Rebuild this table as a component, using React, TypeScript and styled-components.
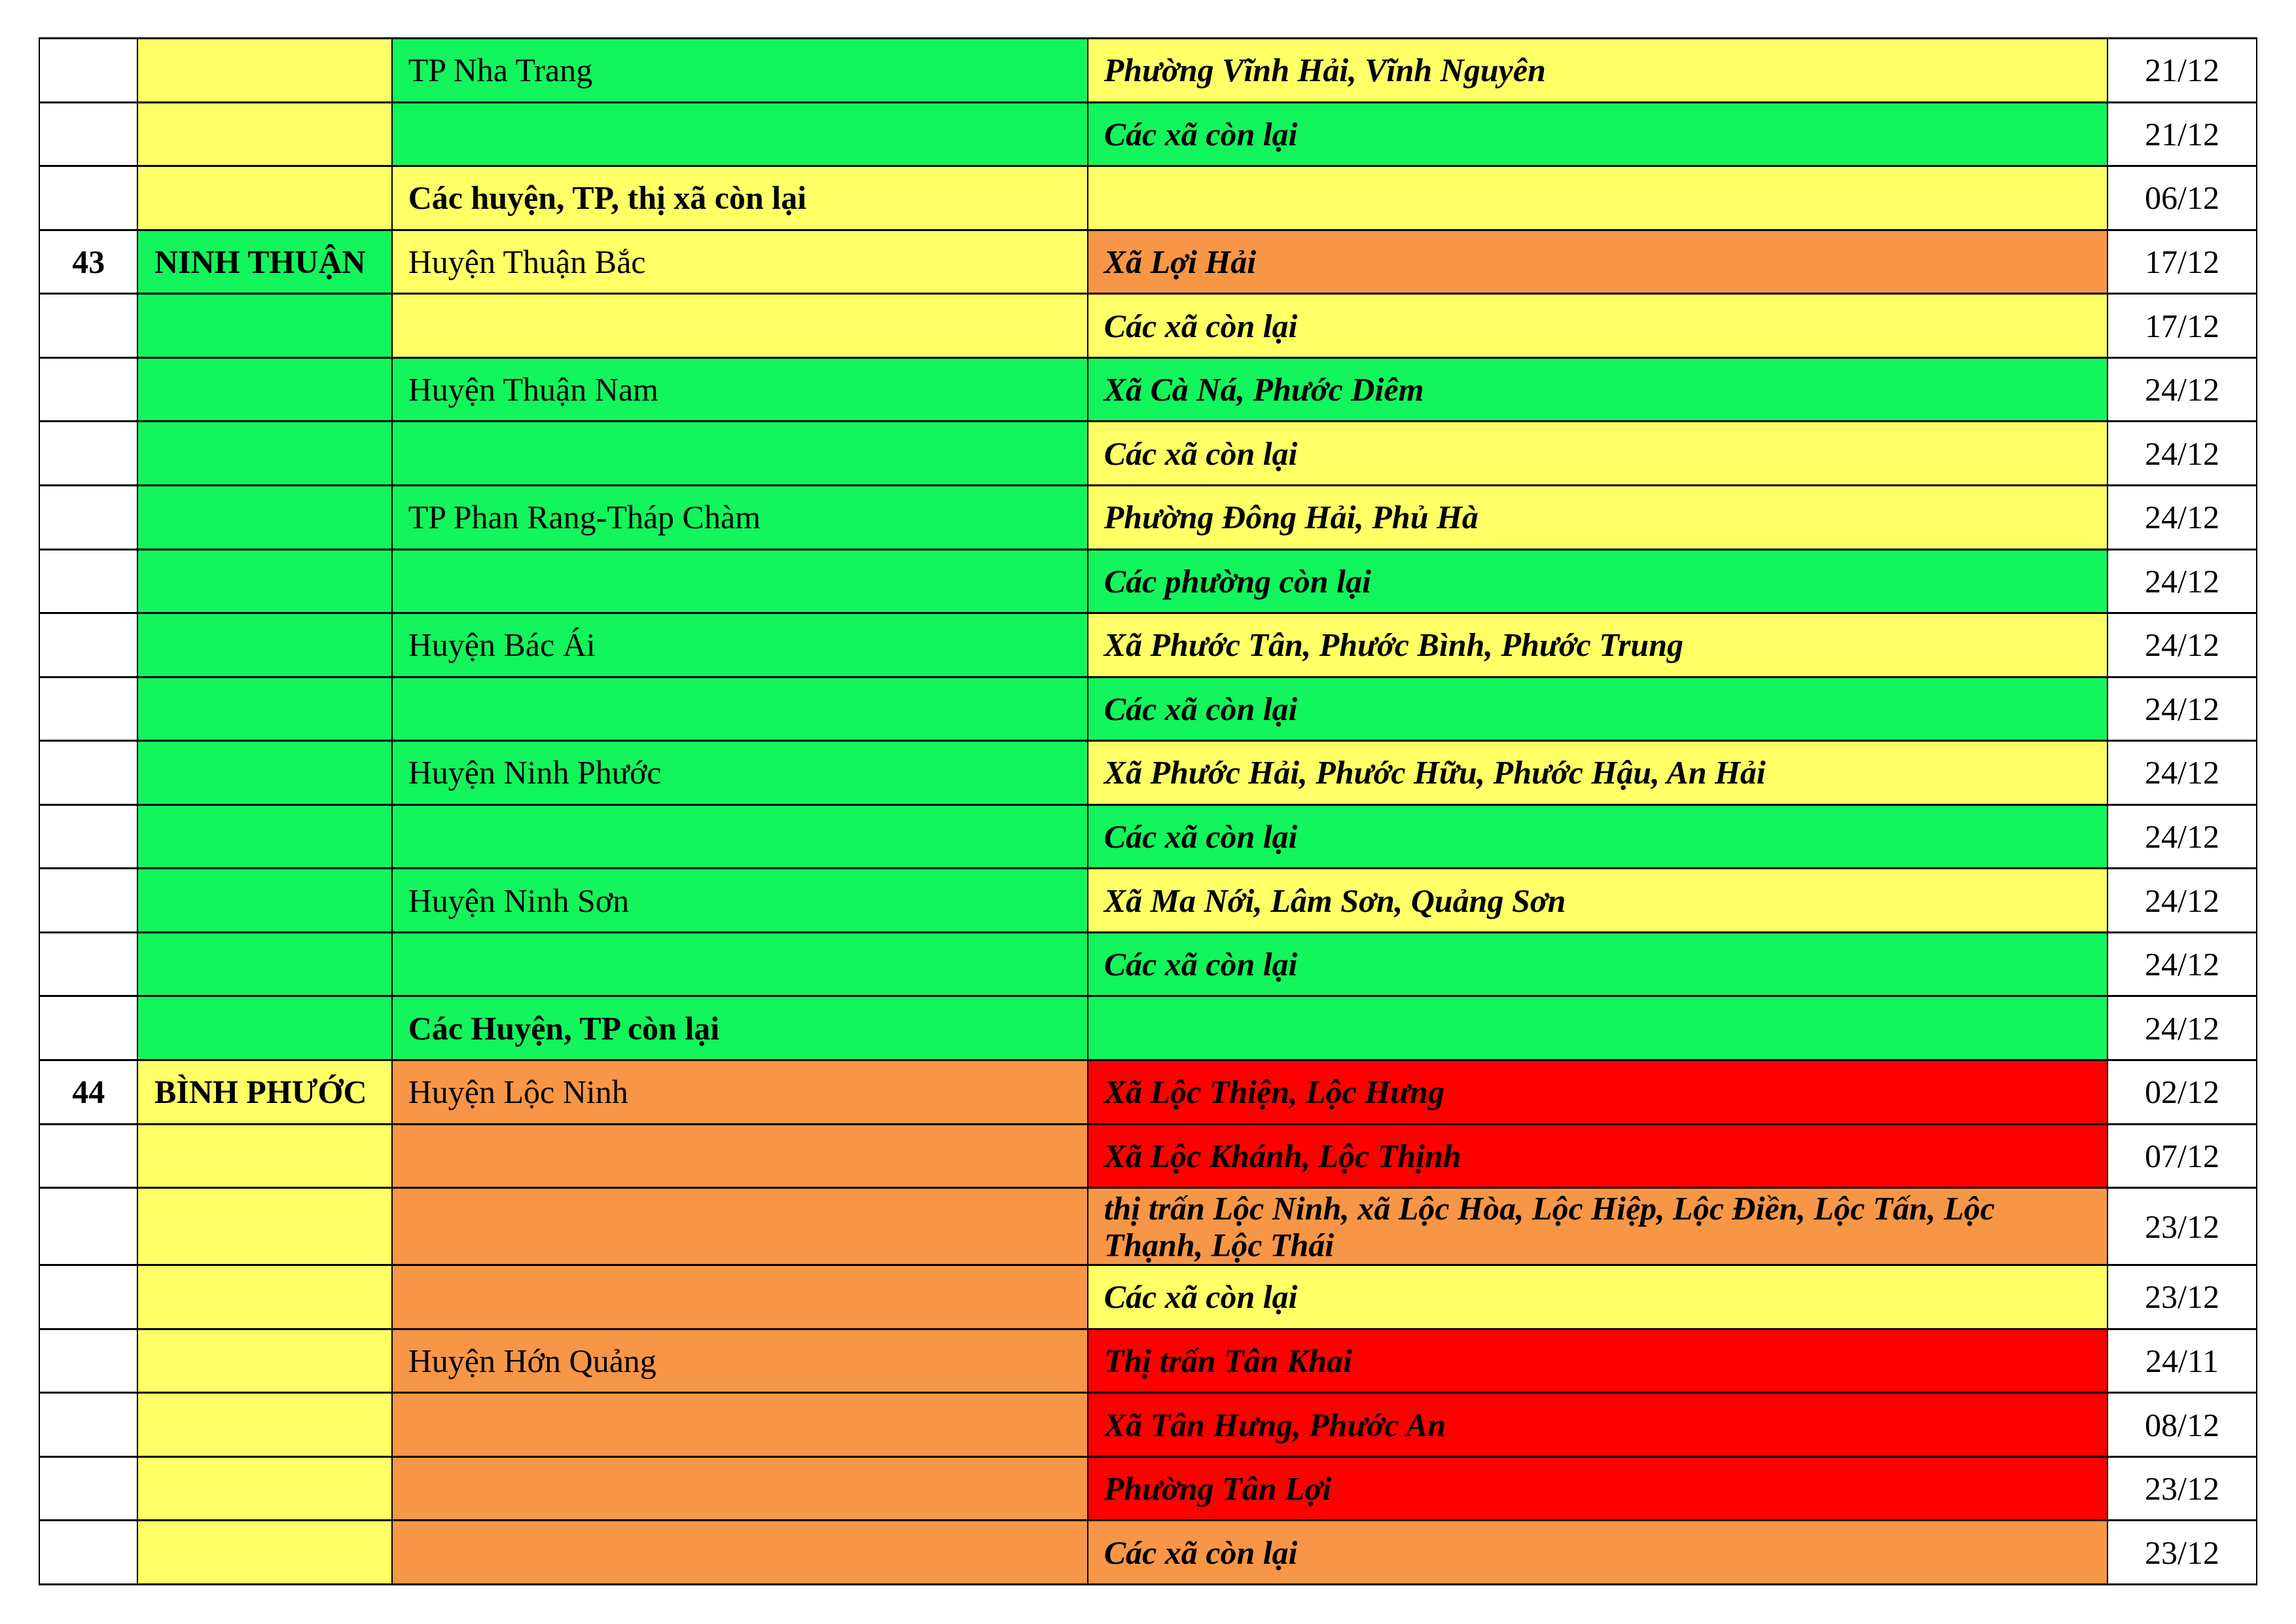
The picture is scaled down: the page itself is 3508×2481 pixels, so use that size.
import React from "react";
import styled, { createGlobalStyle } from "styled-components";

const GlobalStyle = createGlobalStyle`
  html, body {
    margin: 0;
    padding: 0;
    background: #ffffff;
  }
  body {
    width: 3508px;
    height: 2481px;
    overflow: hidden;
  }
`;

type Fill = "white" | "yellow" | "green" | "orange" | "red";

const fills: Record<Fill, string> = {
  white: "#ffffff",
  yellow: "#ffff66",
  green: "#12f55c",
  orange: "#f79646",
  red: "#ff0000",
};

const Page = styled.div`
  padding: 57px 0 0 59.3px;
  font-family: "Liberation Serif", "Times New Roman", serif;
  color: #000000;
`;

const Sheet = styled.table`
  border-collapse: separate;
  border-spacing: 2px 3px;
  background: #000000;
  table-layout: fixed;
  width: 3389.4px;
`;

const Col = styled.col<{ $w: number }>`
  width: ${(p) => p.$w}px;
`;

const Row = styled.tr<{ $tall?: boolean }>`
  height: ${(p) => (p.$tall ? 115 : 94.57)}px;
`;

const BaseCell = styled.td<{ $fill: Fill }>`
  background: ${(p) => fills[p.$fill]};
  padding: 0 24px;
  font-size: 50px;
  line-height: 56px;
  vertical-align: middle;
  box-sizing: border-box;
  white-space: normal;
`;

const NumCell = styled(BaseCell)`
  text-align: center;
  font-weight: 700;
  padding: 0;
`;

const ProvinceCell = styled(BaseCell)`
  font-weight: 700;
  padding-left: 25px;
  white-space: nowrap;
`;

const DistrictCell = styled(BaseCell)<{ $bold?: boolean }>`
  font-weight: ${(p) => (p.$bold ? 700 : 400)};
  white-space: nowrap;
`;

const WardCell = styled(BaseCell)`
  font-weight: 700;
  font-style: italic;
`;

const DateCell = styled(BaseCell)`
  text-align: center;
  padding: 0;
`;

type RowData = {
  no?: string;
  province?: string;
  provinceFill: Fill;
  district?: string;
  districtBold?: boolean;
  districtFill: Fill;
  ward?: string;
  wardFill: Fill;
  date: string;
  tall?: boolean;
};

const rows: RowData[] = [
  { provinceFill: "yellow", district: "TP Nha Trang", districtFill: "green", ward: "Phường Vĩnh Hải, Vĩnh Nguyên", wardFill: "yellow", date: "21/12" },
  { provinceFill: "yellow", districtFill: "green", ward: "Các xã còn lại", wardFill: "green", date: "21/12" },
  { provinceFill: "yellow", district: "Các huyện, TP, thị xã còn lại", districtBold: true, districtFill: "yellow", wardFill: "yellow", date: "06/12" },
  { no: "43", province: "NINH THUẬN", provinceFill: "green", district: "Huyện Thuận Bắc", districtFill: "yellow", ward: "Xã Lợi Hải", wardFill: "orange", date: "17/12" },
  { provinceFill: "green", districtFill: "yellow", ward: "Các xã còn lại", wardFill: "yellow", date: "17/12" },
  { provinceFill: "green", district: "Huyện Thuận Nam", districtFill: "green", ward: "Xã Cà Ná, Phước Diêm", wardFill: "green", date: "24/12" },
  { provinceFill: "green", districtFill: "green", ward: "Các xã còn lại", wardFill: "yellow", date: "24/12" },
  { provinceFill: "green", district: "TP Phan Rang-Tháp Chàm", districtFill: "green", ward: "Phường Đông Hải, Phủ Hà", wardFill: "yellow", date: "24/12" },
  { provinceFill: "green", districtFill: "green", ward: "Các phường còn lại", wardFill: "green", date: "24/12" },
  { provinceFill: "green", district: "Huyện Bác Ái", districtFill: "green", ward: "Xã Phước Tân, Phước Bình, Phước Trung", wardFill: "yellow", date: "24/12" },
  { provinceFill: "green", districtFill: "green", ward: "Các xã còn lại", wardFill: "green", date: "24/12" },
  { provinceFill: "green", district: "Huyện Ninh Phước", districtFill: "green", ward: "Xã Phước Hải, Phước Hữu, Phước Hậu, An Hải", wardFill: "yellow", date: "24/12" },
  { provinceFill: "green", districtFill: "green", ward: "Các xã còn lại", wardFill: "green", date: "24/12" },
  { provinceFill: "green", district: "Huyện Ninh Sơn", districtFill: "green", ward: "Xã Ma Nới, Lâm Sơn, Quảng Sơn", wardFill: "yellow", date: "24/12" },
  { provinceFill: "green", districtFill: "green", ward: "Các xã còn lại", wardFill: "green", date: "24/12" },
  { provinceFill: "green", district: "Các Huyện, TP còn lại", districtBold: true, districtFill: "green", wardFill: "green", date: "24/12" },
  { no: "44", province: "BÌNH PHƯỚC", provinceFill: "yellow", district: "Huyện Lộc Ninh", districtFill: "orange", ward: "Xã Lộc Thiện, Lộc Hưng", wardFill: "red", date: "02/12" },
  { provinceFill: "yellow", districtFill: "orange", ward: "Xã Lộc Khánh, Lộc Thịnh", wardFill: "red", date: "07/12" },
  { provinceFill: "yellow", districtFill: "orange", ward: "thị trấn Lộc Ninh, xã Lộc Hòa, Lộc Hiệp, Lộc Điền, Lộc Tấn, Lộc Thạnh, Lộc Thái", wardFill: "orange", date: "23/12", tall: true },
  { provinceFill: "yellow", districtFill: "orange", ward: "Các xã còn lại", wardFill: "yellow", date: "23/12" },
  { provinceFill: "yellow", district: "Huyện Hớn Quảng", districtFill: "orange", ward: "Thị trấn Tân Khai", wardFill: "red", date: "24/11" },
  { provinceFill: "yellow", districtFill: "orange", ward: "Xã Tân Hưng, Phước An", wardFill: "red", date: "08/12" },
  { provinceFill: "yellow", districtFill: "orange", ward: "Phường Tân Lợi", wardFill: "red", date: "23/12" },
  { provinceFill: "yellow", districtFill: "orange", ward: "Các xã còn lại", wardFill: "orange", date: "23/12" },
];

const columns = [147.7, 386.7, 1061, 1556.6, 225.4];

export default function App() {
  return (
    <>
      <GlobalStyle />
      <Page>
        <Sheet>
          <colgroup>
            {columns.map((w, i) => (
              <Col key={i} $w={w} />
            ))}
          </colgroup>
          <tbody>
            {rows.map((r, i) => (
              <Row key={i} $tall={r.tall}>
                <NumCell $fill="white">{r.no ?? ""}</NumCell>
                <ProvinceCell $fill={r.provinceFill}>{r.province ?? ""}</ProvinceCell>
                <DistrictCell $fill={r.districtFill} $bold={r.districtBold}>
                  {r.district ?? ""}
                </DistrictCell>
                <WardCell $fill={r.wardFill}>{r.ward ?? ""}</WardCell>
                <DateCell $fill="white">{r.date}</DateCell>
              </Row>
            ))}
          </tbody>
        </Sheet>
      </Page>
    </>
  );
}
